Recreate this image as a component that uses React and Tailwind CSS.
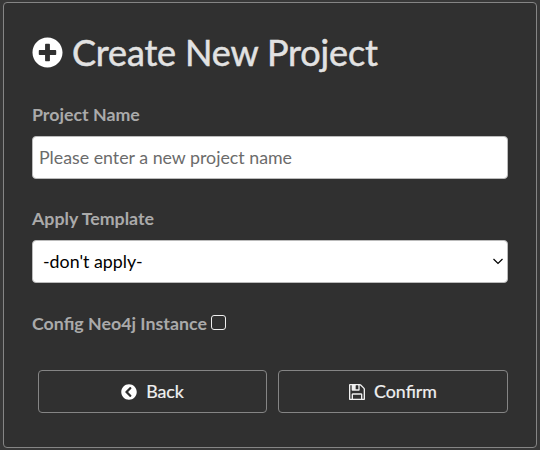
import { FaPlusCircle, FaChevronCircleLeft } from 'react-icons/fa';

function FloppyIcon() {
  return (
    <svg className="size-[16px] shrink-0" viewBox="0 128 1536 1536" fill="currentColor">
      <path d="M384 1536h768v-384H384v384zm896 0h128V640q0-14-10-38.5t-20-34.5l-281-281q-10-10-34-20t-39-10v416q0 40-28 68t-68 28H352q-40 0-68-28t-28-68V256H128v1280h128v-416q0-40 28-68t68-28h832q40 0 68 28t28 68v416zM896 608V288q0-13-9.5-22.5T864 256H672q-13 0-22.5 9.5T640 288v320q0 13 9.5 22.5T672 640h192q13 0 22.5-9.5T896 608zm640 32v928q0 40-28 68t-68 28H96q-40 0-68-28t-28-68V224q0-40 28-68t68-28h928q40 0 88 20t76 48l280 280q28 28 48 76t20 88z" />
    </svg>
  );
}

export default function App() {
  return (
    <div className="h-[450px] w-[540px] overflow-hidden bg-[#383838] pt-[2px] pl-[3px] font-['Lato',sans-serif]">
      <main className="h-[446px] w-[534px] rounded-[4px] border border-[#858585] bg-[#303030] px-[28px] pt-[27px] text-[17.8px]">
        <h1 className="flex h-[44px] items-center gap-[9px] text-[36px] leading-[44px] tracking-[-0.14px] whitespace-nowrap text-[#e2e2e2] [-webkit-text-stroke:0.5px_#e2e2e2]">
          <FaPlusCircle className="mt-[1px] size-[31px] text-white" />
          <span>Create New Project</span>
        </h1>
        <label className="mt-[27px] block h-[26px] leading-[26px] font-bold text-[#aaaaaa]">Project Name</label>
        <input className="mt-[9px] block h-[43px] w-[476px] rounded-[4px] border border-[#bbbbbb] bg-white px-[6px] pb-[2px] placeholder:text-[#6b6b6b]" placeholder="Please enter a new project name" />
        <label className="mt-[26px] block h-[26px] leading-[26px] font-bold text-[#aaaaaa]">Apply Template</label>
        <button className="mt-[9px] flex h-[43px] w-[476px] items-center justify-between rounded-[4px] border border-[#bbbbbb] bg-white pr-[4px] pl-[10px] text-black">
          <span>-don't apply-</span>
          <svg width="10" height="7" viewBox="0 0 10 7" fill="none" stroke="currentColor" strokeWidth="1.2"><path d="M.5 1L5 5.5 9.5 1" /></svg>
        </button>
        <label className="mt-[27px] flex h-[26px] items-center gap-[4px] leading-[26px] font-bold whitespace-nowrap text-[#aaaaaa]">
          <span className="w-[175px]">Config Neo4j Instance</span>
          <input type="checkbox" className="mb-[2px] size-[15px] appearance-none rounded-[3px] border-[1.5px] border-[#eeeeee]" />
        </label>
        <div className="mt-[34px] ml-[6px] flex gap-[11px] text-[#f0f0f0] [-webkit-text-stroke:0.2px_#f0f0f0]">
          <button className="flex h-[43px] w-[229px] items-center justify-center gap-[9px] rounded-[4px] border border-[#858585]"><FaChevronCircleLeft className="size-[16px] text-white" />Back</button>
          <button className="flex h-[43px] w-[230px] items-center justify-center gap-[9px] rounded-[4px] border border-[#858585]"><FloppyIcon />Confirm</button>
        </div>
      </main>
    </div>
  );
}
